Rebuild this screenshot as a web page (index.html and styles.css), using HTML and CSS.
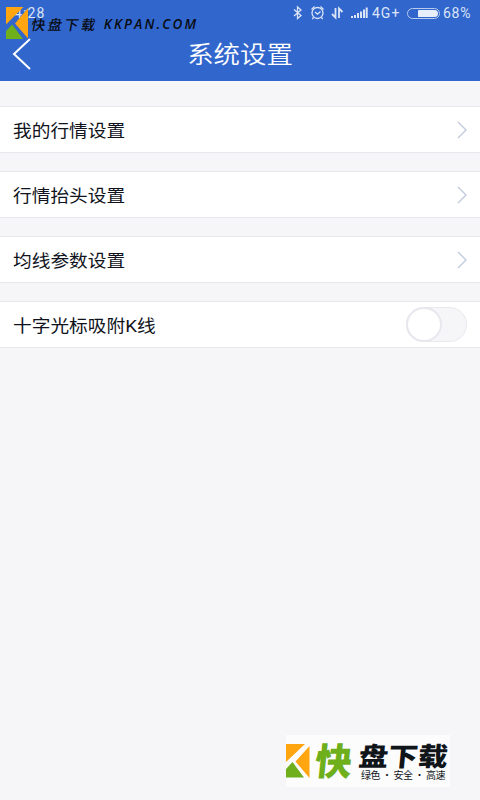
FILE: index.html
```html
<!DOCTYPE html>
<html lang="zh-CN">
<head>
<meta charset="utf-8">
<title>系统设置</title>
<link rel="stylesheet" href="styles.css">
</head>
<body>
<header class="header">
  <div class="status">
    <span class="time">4:28</span>
    <svg class="status-icons" width="80" height="26" viewBox="0 0 80 26">
      <g fill="none" stroke="#dce5f7" stroke-width="1.3">
        <path d="M2 9.500 9 15.500 5.500 18.500V7L9 10 2 16"/>
        <circle cx="25.500" cy="13" r="5.500"/>
        <path d="M23 12 25.500 14.200 28.500 11.500M19.500 9.500 22.500 6.500M31.500 9.500 28.500 6.500M21.500 17.500 20.300 19M29.500 17.500 30.700 19"/>
        <path d="M43.500 8V17.500L40 14M47 18V8.500L50.500 12" stroke-width="1.800"/>
        <path d="M60 18V16M63 18V15M66 18V13M69 18V11.500M72 18V9.500M74.700 18V7.500" stroke-width="2"/>
      </g>
    </svg>
    <span class="network">4G+</span>
    <span class="battery"><span class="charge"></span></span>
    <span class="percent">68%</span>
  </div>
  <div class="titlebar">
    <svg class="back" width="20" height="34" viewBox="0 0 20 34"><path d="M18 2 2 17 18 32" fill="none" stroke="#fff" stroke-width="2"/></svg>
    <h1 class="title">系统设置</h1>
  </div>
</header>
<main class="settings">
  <div class="row"><span class="label">我的行情设置</span><svg class="arrow" width="12" height="20" viewBox="0 0 12 20"><path d="M2 2 10 10 2 18"/></svg></div>
  <div class="row"><span class="label">行情抬头设置</span><svg class="arrow" width="12" height="20" viewBox="0 0 12 20"><path d="M2 2 10 10 2 18"/></svg></div>
  <div class="row"><span class="label">均线参数设置</span><svg class="arrow" width="12" height="20" viewBox="0 0 12 20"><path d="M2 2 10 10 2 18"/></svg></div>
  <div class="row"><span class="label">十字光标吸附K线</span><span class="switch"><span class="knob"></span></span></div>
</main>
<div class="mark-top">
  <svg width="22" height="32" viewBox="0 0 22 32"><path fill="#ffa510" d="M0 0H17.500L0 17.500ZM22 1V31.500L9 16.500Z"/><path fill="#6eaf1b" d="M6.200 17.500 17 32H0V24Z"/></svg>
  <span class="mark-name">快盘下载</span>
  <span class="mark-url">KKPAN.COM</span>
</div>
<div class="mark-bottom">
  <svg class="mark-logo" width="24" height="34" viewBox="0 0 24 34"><path fill="#ffa510" d="M0 0H19L0 18ZM23.500 2V34L9.500 17.500Z"/><path fill="#6eaf1b" d="M6.500 18 18 33.500H0V25Z"/></svg>
  <span class="mark-lead">快</span>
  <div class="mark-copy">
    <span class="mark-rest">盘下载</span>
    <span class="mark-slogan">绿色 · 安全 · 高速</span>
  </div>
</div>
</body>
</html>
```

FILE: styles.css
```css
* { box-sizing: border-box; }
body {
  margin: 0;
  width: 480px;
  height: 800px;
  position: relative;
  overflow: hidden;
  background: #f6f6f9;
  font-family: Roboto, "Noto Sans CJK SC", sans-serif;
}
.header { height: 81px; background: #3166cd; }
.status {
  display: flex;
  align-items: center;
  height: 26px;
  padding: 0 8px 0 14px;
  color: #dce5f7;
  font-size: 13px;
  line-height: 26px;
}
.time { margin-right: auto; font-size: 14px; letter-spacing: 1.1px; }
.network { width: 35px; font-size: 14px; letter-spacing: 1px; }
.battery {
  display: flex;
  justify-content: flex-end;
  width: 33px;
  height: 11px;
  margin-right: 3px;
  padding: 1px;
  border: 1px solid #b9caee;
  border-radius: 6px;
}
.charge { width: 20px; border-radius: 1px 4px 4px 1px; background: #e8eefa; }
.percent { width: 29px; font-size: 14px; letter-spacing: .7px; white-space: nowrap; }
.titlebar {
  display: grid;
  grid-template-columns: 20px 1fr 20px;
  align-items: center;
  height: 55px;
  padding: 0 12px;
}
.title {
  margin: 0;
  padding-top: 4px;
  color: #fff;
  font-size: 24px;
  font-weight: 350;
  line-height: 51px;
  text-align: center;
  transform: scaleX(1.1);
}
.settings { display: grid; gap: 18px; padding-top: 25px; }
.row {
  display: flex;
  align-items: center;
  justify-content: space-between;
  height: 47px;
  padding: 0 12px 0 13px;
  border: solid #e7e7ee;
  border-width: 1px 0;
  background: #fff;
}
.label {
  padding-top: 3px;
  color: #10131b;
  font-size: 17px;
  line-height: 42px;
  transform: scaleX(1.1);
  transform-origin: left;
}
.arrow path { fill: none; stroke: #c2cbdc; stroke-width: 1.400; }
.switch {
  width: 61px;
  height: 35px;
  margin-right: 1px;
  border: 1px solid #e8e8ee;
  border-radius: 18px;
  background: #f6f6f9;
}
.knob {
  display: block;
  width: 36px;
  height: 35px;
  margin: -1px;
  border: 2px solid #e7e7ee;
  border-radius: 50%;
  background: #fff;
}
.mark-top {
  position: absolute;
  left: 6px;
  top: 7px;
  display: flex;
  color: #080b12;
  white-space: nowrap;
}
.mark-name {
  margin: 8px 0 0 3px;
  font: 500 14px/18px "Noto Sans CJK SC", sans-serif;
  letter-spacing: 2.700px;
  transform: skewX(-10deg);
}
.mark-url {
  margin: 8px 0 0 6px;
  font: italic 600 13.500px/19px "Open Sans", sans-serif;
  letter-spacing: 2.200px;
}
.mark-bottom {
  position: absolute;
  left: 286px;
  top: 735px;
  display: flex;
  width: 164px;
  height: 52px;
  background: #fcfcfd;
  color: #10151a;
  white-space: nowrap;
}
.mark-logo { margin-top: 9px; }
.mark-lead {
  width: 37px;
  margin: 6px 0 0 5px;
  color: #6eaf1b;
  font: 900 37px/37px "Noto Sans CJK SC", sans-serif;
  transform: skewX(-6deg);
}
.mark-copy { display: flex; flex-direction: column; padding: 7px 0 0 7px; }
.mark-rest {
  width: 78px;
  height: 25px;
  font: 900 26px/25px "Noto Sans CJK SC", sans-serif;
  transform: scaleX(1.14) skewX(-5deg);
  transform-origin: left;
}
.mark-slogan {
  margin: 1px 0 0 2px;
  font: 10px/13px "Noto Sans CJK SC", sans-serif;
  letter-spacing: -.4px;
}
```
